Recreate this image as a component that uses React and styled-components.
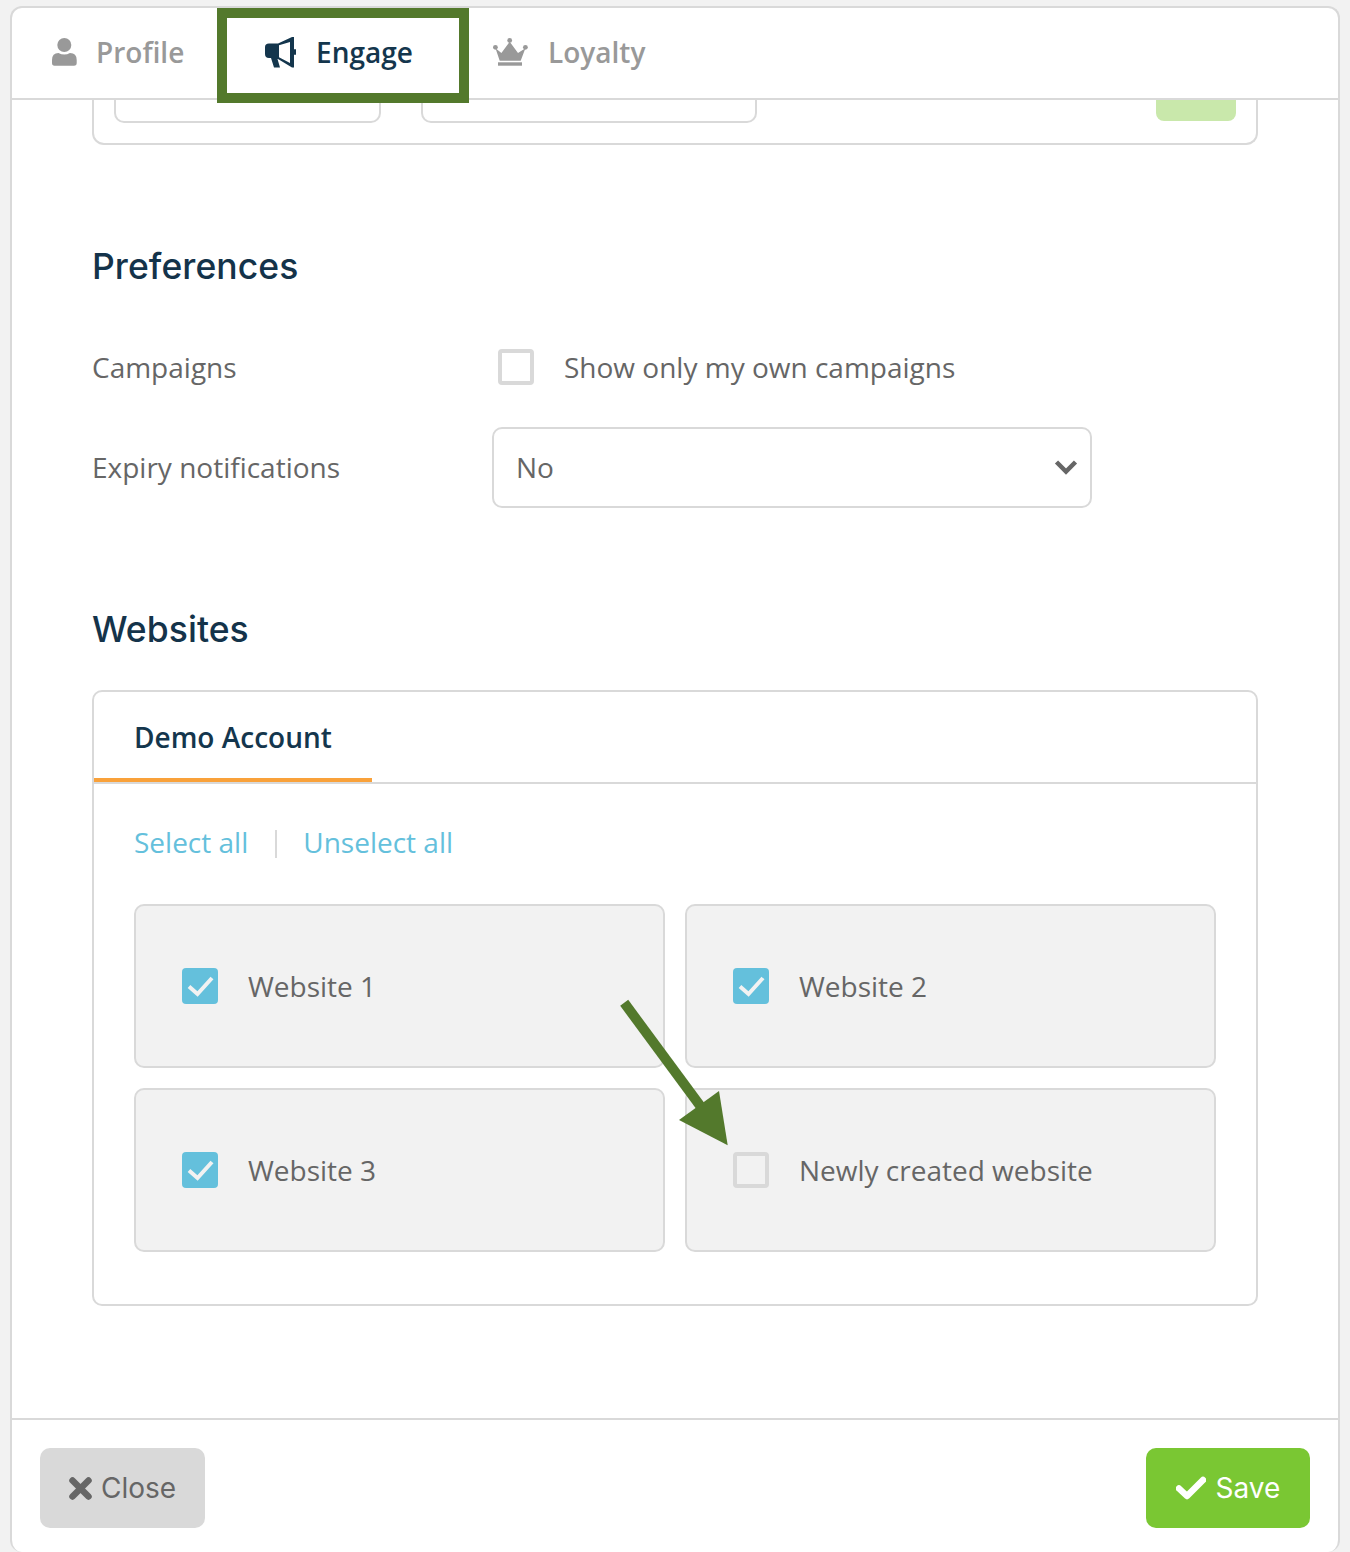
import React from "react";
import styled, { createGlobalStyle } from "styled-components";

const GlobalStyle = createGlobalStyle`
  html, body {
    margin: 0;
    background: #f2f2f2;
  }
  * {
    box-sizing: border-box;
  }
`;

const Panel = styled.div`
  position: relative;
  display: flex;
  flex-direction: column;
  height: 1546px;
  margin: 6px 10px 0;
  background: #fff;
  border: 2px solid #d9d9d9;
  border-bottom: 0;
  border-radius: 12px;
  font-family: "Open Sans", sans-serif;
  font-size: 28px;
  color: #666;
  overflow: hidden;
`;

const TabBar = styled.div`
  display: flex;
  flex: 0 0 92px;
  align-items: center;
  padding: 0 0 2px 40px;
  border-bottom: 2px solid #d9d9d9;
`;

const Tab = styled.div`
  display: flex;
  align-items: center;
  width: ${(p) => p.$width}px;
  gap: ${(p) => p.$gap}px;
  font-weight: 600;
  color: ${(p) => (p.$active ? "#14364d" : "#999")};
`;

const Highlight = styled.div`
  position: absolute;
  left: 205px;
  top: 0;
  width: 252px;
  height: 95px;
  border: 10px solid #53792c;
`;

const Content = styled.div`
  flex: 1;
  padding: 0 80px;
`;

const ClippedCard = styled.div`
  display: flex;
  height: 45px;
  padding: 0 20px;
  border: 2px solid #d9d9d9;
  border-top: 0;
  border-radius: 0 0 12px 12px;
`;

const ClippedInput = styled.div`
  width: ${(p) => p.$width}px;
  height: 23px;
  margin-right: 40px;
  border: 2px solid #d9d9d9;
  border-top: 0;
  border-radius: 0 0 10px 10px;
`;

const ClippedButton = styled.div`
  width: 80px;
  height: 21px;
  margin-left: auto;
  background: #c9e8ab;
  border-radius: 0 0 8px 8px;
`;

const Heading = styled.h2`
  margin: ${(p) => p.$top}px 0 ${(p) => p.$bottom}px;
  font-family: Inter, sans-serif;
  font-size: 35.5px;
  font-weight: 500;
  letter-spacing: 0.05px;
  line-height: 44px;
  color: #14334a;
`;

const FormRow = styled.div`
  display: flex;
  align-items: center;
  margin-bottom: ${(p) => p.$bottom || 0}px;
`;

const FormLabel = styled.div`
  flex: 0 0 400px;
  padding-bottom: ${(p) => p.$lift || 0}px;
`;

const CheckField = styled.label`
  display: flex;
  align-items: center;
  gap: 30px;
  margin-left: ${(p) => p.$indent || 0}px;
`;

const Box = styled.span`
  display: flex;
  align-items: center;
  justify-content: center;
  width: 36px;
  height: 36px;
  border-radius: 4px;
  background: ${(p) => (p.$checked ? "#64c0dc" : "#fff0")};
  border: ${(p) => (p.$checked ? "0" : "4px solid #d9d9d9")};
`;

const Select = styled.div`
  display: flex;
  align-items: center;
  justify-content: space-between;
  width: 600px;
  height: 81px;
  padding: 0 12px 2px 22px;
  border: 2px solid #d9d9d9;
  border-radius: 10px;
`;

const Card = styled.div`
  height: 616px;
  border: 2px solid #d9d9d9;
  border-radius: 10px;
`;

const CardTabs = styled.div`
  height: 92px;
  border-bottom: 2px solid #d9d9d9;
`;

const CardTab = styled.div`
  width: 278px;
  height: 90px;
  padding-left: 40px;
  border-bottom: 4px solid #f9a13a;
  font-weight: 600;
  line-height: 90px;
  color: #14364d;
`;

const CardBody = styled.div`
  padding: 38px 40px 40px;
`;

const LinkRow = styled.div`
  display: flex;
  align-items: center;
  height: 40px;
  margin-bottom: 42px;
  color: #64c0dc;
`;

const Divider = styled.span`
  width: 2px;
  height: 28px;
  margin: 4px 26px 0 27px;
  background: #d9d9d9;
`;

const TileGrid = styled.div`
  display: grid;
  grid-template-columns: 531px 531px;
  grid-auto-rows: 164px;
  gap: 20px;
`;

const Tile = styled.div`
  display: flex;
  align-items: center;
  padding-left: 46px;
  background: #f2f2f2;
  border: 2px solid #d9d9d9;
  border-radius: 10px;
`;

const Footer = styled.div`
  display: flex;
  justify-content: space-between;
  flex: 0 0 134px;
  padding: 28px 28px 0;
  border-top: 2px solid #d9d9d9;
`;

const Button = styled.div`
  display: flex;
  align-items: center;
  justify-content: center;
  gap: ${(p) => (p.$primary ? 10 : 9)}px;
  width: ${(p) => p.$width}px;
  height: 80px;
  border-radius: 10px;
  font-family: Inter, sans-serif;
  font-size: 28px;
  background: ${(p) => (p.$primary ? "#7ac733" : "#d9d9d9")};
  color: ${(p) => (p.$primary ? "#fff" : "#666")};
`;

const Arrow = styled.svg`
  position: absolute;
  left: 0;
  top: 0;
  pointer-events: none;
`;

const CheckMark = () => (
  <svg width="36" height="36" viewBox="0 0 36 36">
    <path d="M7 18.500l8.500 7.500L30 10" fill="none" stroke="#f2f2f2" strokeWidth="4" />
  </svg>
);

const UserIcon = () => (
  <svg width="25" height="28" viewBox="0 0 25 28" fill="#999">
    <circle cx="12.300" cy="7" r="7" />
    <path d="M2.500 27.700Q0 27.700 0 25V22Q0 15 6.500 15Q12.300 18 18 15Q24.700 15 24.700 22V25Q24.700 27.700 22 27.700z" />
  </svg>
);

const HornIcon = () => (
  <svg width="31" height="31" viewBox="0 0 31 31" fill="#14364d">
    <path
      fillRule="evenodd"
      d="M4 6.500H13L27 0H29V30.500H27L13 22H12.500L15 30.500H9L6 21H4Q0 21 0 17V10Q0 6.500 4 6.500zM14 8.300V20.300L25 26V5z"
    />
    <rect x="29" y="12" width="2" height="6" rx="1" />
  </svg>
);

const CrownIcon = () => (
  <svg width="35" height="28" viewBox="0 0 35 28" fill="#999">
    <circle cx="2.400" cy="9.300" r="2.400" />
    <circle cx="16.700" cy="2.400" r="2.400" />
    <circle cx="32.400" cy="9.300" r="2.400" />
    <path d="M2.500 10.300L8.400 15L16.700 3.700L25 15L32.400 10.300L27.700 22.700H6.700z" />
    <rect x="5" y="24.300" width="24" height="3.400" />
  </svg>
);

const ChevronIcon = () => (
  <svg width="24" height="16" viewBox="0 0 24 16">
    <path d="M2.500 3L12 12.500L21.500 3" fill="none" stroke="#666" strokeWidth="4.500" />
  </svg>
);

const CloseIcon = () => (
  <svg width="23" height="23" viewBox="0 0 23 23">
    <path d="M3.500 3.500L19.500 19.500M19.500 3.500L3.500 19.500" stroke="#666" strokeWidth="6.500" strokeLinecap="round" />
  </svg>
);

const SaveIcon = () => (
  <svg width="30" height="24" viewBox="0 0 30 24">
    <path d="M3 12.500L11 20L27 4" fill="none" stroke="#fff" strokeWidth="6.500" strokeLinecap="round" strokeLinejoin="round" />
  </svg>
);

const websites = [
  { name: "Website 1", checked: true },
  { name: "Website 2", checked: true },
  { name: "Website 3", checked: true },
  { name: "Newly created website", checked: false },
];

export default function App() {
  return (
    <Panel>
      <GlobalStyle />
      <TabBar>
        <Tab $width={213} $gap={19}>
          <UserIcon />
          Profile
        </Tab>
        <Tab $active $width={228} $gap={20}>
          <HornIcon />
          Engage
        </Tab>
        <Tab $width={180} $gap={20}>
          <CrownIcon />
          Loyalty
        </Tab>
      </TabBar>
      <Highlight />
      <Content>
        <ClippedCard>
          <ClippedInput $width={267} />
          <ClippedInput $width={336} />
          <ClippedButton />
        </ClippedCard>
        <Heading $top={100} $bottom={59}>Preferences</Heading>
        <FormRow $bottom={41}>
          <FormLabel>Campaigns</FormLabel>
          <CheckField $indent={6}>
            <Box />
            Show only my own campaigns
          </CheckField>
        </FormRow>
        <FormRow>
          <FormLabel $lift={2}>Expiry notifications</FormLabel>
          <Select>
            No
            <ChevronIcon />
          </Select>
        </FormRow>
        <Heading $top={100} $bottom={38}>Websites</Heading>
        <Card>
          <CardTabs>
            <CardTab>Demo Account</CardTab>
          </CardTabs>
          <CardBody>
            <LinkRow>
              Select all
              <Divider />
              Unselect all
            </LinkRow>
            <TileGrid>
              {websites.map((site) => (
                <Tile key={site.name}>
                  <CheckField>
                    <Box $checked={site.checked}>{site.checked && <CheckMark />}</Box>
                    {site.name}
                  </CheckField>
                </Tile>
              ))}
            </TileGrid>
          </CardBody>
        </Card>
      </Content>
      <Footer>
        <Button $width={165}>
          <CloseIcon />
          Close
        </Button>
        <Button $primary $width={164}>
          <SaveIcon />
          Save
        </Button>
      </Footer>
      <Arrow width="1330" height="1200">
        <line x1="612.200" y1="994.800" x2="692" y2="1103" stroke="#53792c" strokeWidth="10" />
        <polygon points="707,1083 715.700,1137.300 667,1112" fill="#53792c" />
      </Arrow>
    </Panel>
  );
}
